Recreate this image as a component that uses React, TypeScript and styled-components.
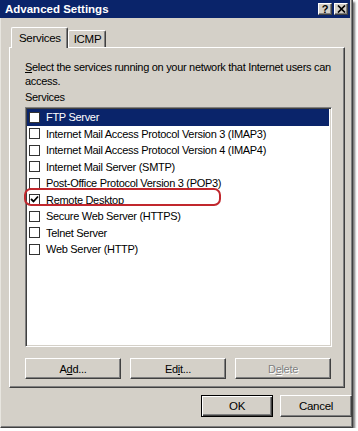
import React from 'react';
import styled, { createGlobalStyle, css } from 'styled-components';

const services = [
  { name: 'FTP Server', checked: false },
  { name: 'Internet Mail Access Protocol Version 3 (IMAP3)', checked: false },
  { name: 'Internet Mail Access Protocol Version 4 (IMAP4)', checked: false },
  { name: 'Internet Mail Server (SMTP)', checked: false },
  { name: 'Post-Office Protocol Version 3 (POP3)', checked: false },
  { name: 'Remote Desktop', checked: true },
  { name: 'Secure Web Server (HTTPS)', checked: false },
  { name: 'Telnet Server', checked: false },
  { name: 'Web Server (HTTP)', checked: false },
];

const App = () => {
  return (
    <>
      <GlobalStyle />
      <Window>
        <TitleBar>
          <Title>Advanced Settings</Title>
          <Caption>
            <CaptionButton>?</CaptionButton>
            <CaptionButton>
              <svg width="9" height="8" viewBox="0 0 9 8">
                <path d="M1 0.5 L8 7.5 M8 0.5 L1 7.5" stroke="#000" strokeWidth="1.7" />
              </svg>
            </CaptionButton>
          </Caption>
        </TitleBar>

        <Body>
          <TabStrip>
            <Tab $active>Services</Tab>
            <Tab>ICMP</Tab>
          </TabStrip>

          <Panel>
            <Description>
              <u>S</u>elect the services running on your network that Internet users can
              <br />
              access.
            </Description>
            <Label>Services</Label>

            <ListBox>
              {services.map((s, i) => (
                <Row key={s.name} $selected={i === 0}>
                  <CheckBox>
                    {s.checked && (
                      <svg width="9" height="9" viewBox="0 0 9 9">
                        <path d="M1 4 L3.5 6.5 L8 1.5" stroke="#000" strokeWidth="1.8" fill="none" />
                      </svg>
                    )}
                  </CheckBox>
                  <RowText>{s.name}</RowText>
                </Row>
              ))}
              <Highlight />
            </ListBox>

            <ButtonRow>
              <Button>
                A<u>d</u>d...
              </Button>
              <Button>
                Ed<u>i</u>t...
              </Button>
              <Button disabled>
                D<u>e</u>lete
              </Button>
            </ButtonRow>
          </Panel>

          <Footer>
            <DialogButton $default>OK</DialogButton>
            <DialogButton>Cancel</DialogButton>
          </Footer>
        </Body>
      </Window>
    </>
  );
};
export default App;

// Style component
const GlobalStyle = createGlobalStyle`
  body {
    margin: 0;
    background: #ffffff;
    font-family: "Liberation Sans", Arial, sans-serif;
    font-size: 11px;
    letter-spacing: -0.3px;
    color: #000;
  }
`;

const Window = styled.div`
  width: 353px;
  height: 428px;
  box-sizing: border-box;
  padding-right: 2px;

  display: flex;
  flex-direction: column;

  background-color: #d4d0c8;
  border-left: 1px solid #e8e6e0;
  border-right: 1px solid #404040;
  border-bottom: 1px solid #404040;
  box-shadow: inset -1px -1px 0 #808080, 2px 2px 2px rgba(0, 0, 0, 0.55);
`;

const TitleBar = styled.div`
  height: 18px;
  margin-left: -1px;

  display: flex;
  align-items: center;
  justify-content: space-between;

  padding: 0 2px 0 5px;
  background-color: #0a246a;
`;

const Title = styled.div`
  color: #fff;
  font-weight: bold;
  font-size: 11.5px;
  letter-spacing: 0;
`;

const Caption = styled.div`
  display: flex;
  gap: 2px;
`;

const CaptionButton = styled.div`
  width: 14px;
  height: 12px;
  box-sizing: border-box;

  display: flex;
  align-items: center;
  justify-content: center;

  background-color: #d4d0c8;
  border: 1px solid;
  border-color: #fff #404040 #404040 #fff;
  box-shadow: inset -1px -1px 0 #808080;

  font-weight: bold;
  font-size: 11px;
  line-height: 1;
`;

const Body = styled.div`
  padding: 9px 0 0 8px;
`;

const TabStrip = styled.div`
  height: 20px;
  padding-left: 2px;

  display: flex;
  align-items: flex-end;
`;

const Tab = styled.div<{ $active?: boolean }>`
  position: relative;
  box-sizing: border-box;
  height: 17px;
  padding: 0 4px 0 5px;

  display: flex;
  align-items: center;

  font-size: 11.5px;
  background-color: #d4d0c8;
  border: 1px solid;
  border-color: #fff #404040 transparent #fff;
  border-bottom: none;
  border-radius: 2px 2px 0 0;
  box-shadow: inset -1px 0 0 #808080;

  ${({ $active }) =>
    $active &&
    css`
      height: 21px;
      margin-bottom: -1px;
      padding: 0 6px 0 7px;
      z-index: 1;
    `}
`;

const Panel = styled.div`
  width: 336px;
  height: 341px;
  box-sizing: border-box;
  padding: 12px 0 0 15px;

  display: flex;
  flex-direction: column;

  border: 1px solid;
  border-color: #fff #404040 #404040 #fff;
  box-shadow: inset -1px -1px 0 #808080;
`;

const Description = styled.div`
  line-height: 14px;
  white-space: nowrap;
`;

const Label = styled.div`
  margin-top: 2px;
  line-height: 14px;
`;

const ListBox = styled.div`
  position: relative;
  width: 307px;
  height: 240px;
  box-sizing: border-box;
  margin-top: 3px;

  border: 1px solid;
  border-color: #808080 #fff #fff #808080;
  box-shadow: inset 1px 1px 0 #404040, inset -1px -1px 0 #d4d0c8;
  background-color: #fff;
  padding: 1px 2px 0 1px;
`;

const Row = styled.div<{ $selected?: boolean }>`
  height: 16.5px;

  display: flex;
  align-items: center;

  padding-left: 2px;
  background-color: ${({ $selected }) => ($selected ? '#0a246a' : 'transparent')};
  color: ${({ $selected }) => ($selected ? '#fff' : '#000')};
`;

const CheckBox = styled.div`
  width: 11px;
  height: 11px;
  box-sizing: border-box;

  display: flex;
  align-items: center;
  justify-content: center;

  border: 1px solid #333;
  background-color: #fff;
`;

const RowText = styled.span`
  margin-left: 6px;
  white-space: nowrap;
`;

const Highlight = styled.div`
  position: absolute;
  left: -2px;
  top: 80px;
  width: 197px;
  height: 18px;
  box-sizing: border-box;

  border: 2px solid #c1272d;
  border-radius: 7px;
`;

const ButtonRow = styled.div`
  margin-top: 11px;

  display: flex;
  gap: 9px;
`;

const buttonBase = css`
  box-sizing: border-box;
  padding: 0;

  font-family: "Liberation Sans", Arial, sans-serif;
  font-size: 11px;
  letter-spacing: -0.3px;
  color: #000;

  background-color: #d4d0c8;
  border: 1px solid;
  border-color: #fff #404040 #404040 #fff;
  box-shadow: inset -1px -1px 0 #808080;

  &:disabled {
    color: #808080;
    text-shadow: 1px 1px 0 #fff;
  }
`;

const Button = styled.button`
  ${buttonBase}
  width: 96px;
  height: 21px;
`;

const Footer = styled.div`
  width: 343px;
  margin-top: 7px;

  display: flex;
  justify-content: flex-end;
  gap: 7px;
`;

const DialogButton = styled.button<{ $default?: boolean }>`
  ${buttonBase}
  width: 72px;
  height: 22px;
  font-size: 11.5px;

  ${({ $default }) =>
    $default &&
    css`
      border: 1px solid #000;
      box-shadow: inset 1px 1px 0 #fff, inset -1px -1px 0 #404040, inset -2px -2px 0 #808080;
    `}
`;
